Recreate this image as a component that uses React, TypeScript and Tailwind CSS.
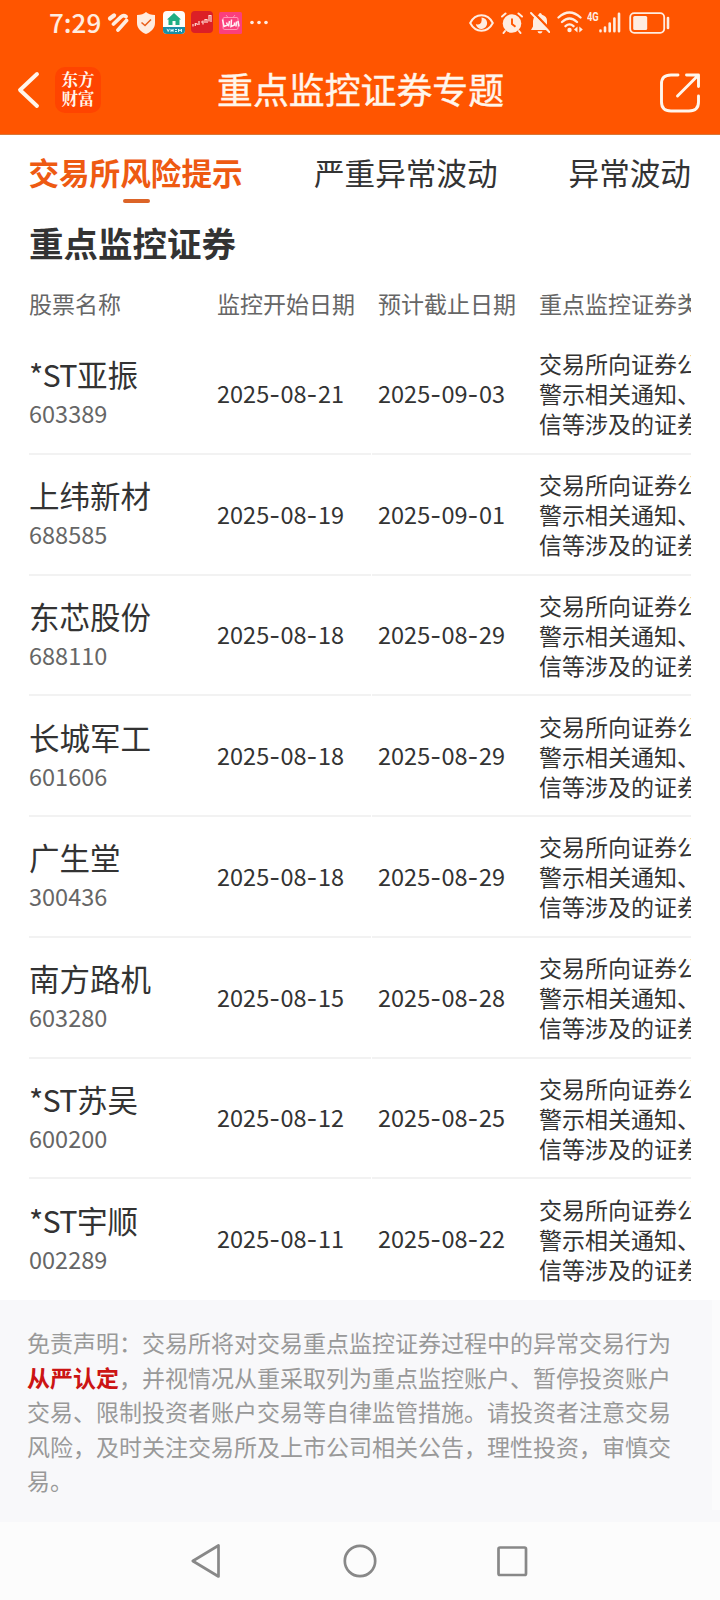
import React from "react";

const rows = [
  ["*ST亚振", "603389", "2025-08-21", "2025-09-03"],
  ["上纬新材", "688585", "2025-08-19", "2025-09-01"],
  ["东芯股份", "688110", "2025-08-18", "2025-08-29"],
  ["长城军工", "601606", "2025-08-18", "2025-08-29"],
  ["广生堂", "300436", "2025-08-18", "2025-08-29"],
  ["南方路机", "603280", "2025-08-15", "2025-08-28"],
  ["*ST苏吴", "600200", "2025-08-12", "2025-08-25"],
  ["*ST宇顺", "002289", "2025-08-11", "2025-08-22"],
];

const disclaimer = [
  "交易、限制投资者账户交易等自律监管措施。请投资者注意交易",
  "风险，及时关注交易所及上市公司相关公告，理性投资，审慎交",
  "易。",
];

function DateText({ value }: { value: string }) {
  return (
    <span className="block pt-[1px] text-[23.5px]">
      {value.split("-").map((part, i) => (
        <React.Fragment key={i}>
          {i > 0 && <span className="font-['Inter'] tracking-[0.5px]">-</span>}
          {part}
        </React.Fragment>
      ))}
    </span>
  );
}

function StockName({ name }: { name: string }) {
  const flagged = name.startsWith("*ST");
  return (
    <span className="block h-[40px] text-[30.500px] leading-[37px]">
      {flagged && <span className="tracking-[-0.7px]">*ST</span>}
      {flagged ? name.slice(3) : name}
    </span>
  );
}

function StatusBar() {
  return (
    <div className="flex h-[45px] items-start pl-[49px] text-[#ffece0]">
      <span className="mt-[4px] w-[58px] text-[26px] leading-[36px] font-medium">7:29</span>
      <svg className="mt-[12px] h-[22px] w-[22px]" viewBox="0 0 22 22" fill="none" stroke="currentColor" strokeLinecap="round" strokeLinejoin="round">
        <path d="M3 6.500L7 3.500" strokeWidth="4.200" />
        <path d="M6.500 12L14 4.800Q16.500 2.500 19 4.500M11 18L19.500 8.500" strokeWidth="3.700" />
      </svg>
      <svg className="mt-[12px] ml-[8px] h-[22px] w-[18px]" viewBox="0 0 18 22">
        <path d="M9 0C11 2 14 3 18 3V11C18 16.500 14 20 9 22C4 20 0 16.500 0 11V3C4 3 7 2 9 0Z" fill="currentColor" />
        <path d="M4.500 10.500L8 13.500L14 7.500" fill="none" stroke="#e8601c" strokeWidth="1.600" />
      </svg>
      <svg className="mt-[11px] ml-[8px] h-[23px] w-[22px]" viewBox="0 0 22 23">
        <defs>
          <clipPath id="homeClip"><rect width="22" height="23" rx="4" /></clipPath>
        </defs>
        <g clipPath="url(#homeClip)">
          <rect width="22" height="23" fill="#fdfdfa" />
          <path d="M11 2L18 8.500H16.500V14H12.500V10H9.500V14H5.500V8.500H4Z" fill="#1fae84" />
          <rect y="16" width="22" height="7" fill="#1a8fa6" />
          <path d="M4 17.800L5.200 20.500L6.400 17.800M8 21V18M8 19.500H10V18M10 21V18.500M12 18.500H14M12 20.500H14M15.500 21V18L17 20L18.500 18V21" stroke="#e9ffff" strokeWidth="0.900" fill="none" />
        </g>
      </svg>
      <svg className="mt-[11px] ml-[6px] h-[22px] w-[22px]" viewBox="0 0 22 22">
        <rect width="22" height="22" rx="4" fill="#dc1f26" />
        <path d="M2 15.500V13M4.300 15V12M5 12.500L7 13.500M8 14V10M10 11H12M12 13.500V9.500M14 12V8.500H16V12M18 10.500V4.500H20V11" stroke="#ffd9d4" strokeWidth="1.200" fill="none" />
      </svg>
      <svg className="mt-[12px] ml-[6px] h-[22px] w-[23px]" viewBox="0 0 23 22">
        <rect width="23" height="22" rx="1.500" fill="#fb3f7d" />
        <path d="M7 3L9 5.500M16 3L14 5.500M5 5.500H18Q19 5.500 19 7V16Q19 17.500 17 17.500H6Q4 17.500 4 16V7Q4 5.500 5 5.500Z" stroke="#ff93b6" strokeWidth="1" fill="none" />
        <path d="M3.500 7.500L5 14.500L8.500 13L7.500 10.500M10.500 9L9.500 14.500M12.500 7.500L12 14.500L15.500 13L15.500 10.500M17.500 9.500L17 14.500M19 9L20 14.500" stroke="#fff0f5" strokeWidth="1.500" fill="none" />
      </svg>
      <svg className="mt-[20px] ml-[8px] h-[5px] w-[18px]" viewBox="0 0 18 5" fill="currentColor">
        <circle cx="2" cy="2.500" r="1.800" /><circle cx="9" cy="2.500" r="1.800" /><circle cx="16" cy="2.500" r="1.800" />
      </svg>

      <svg className="mt-[14px] ml-[201px] h-[18px] w-[25px]" viewBox="0 0 25 18">
        <path d="M1.200 9C6.500-1.200 18.500-1.200 23.800 9C18.500 19.200 6.500 19.200 1.200 9Z" fill="none" stroke="currentColor" strokeWidth="2" />
        <path d="M12.500 3.500A5.700 5.700 0 1 1 6.800 10Q10.500 11.500 12.200 8.500Q13 6 12.500 3.500Z" fill="currentColor" />
      </svg>
      <svg className="mt-[12px] ml-[7px] h-[22px] w-[22px]" viewBox="0 0 22 22">
        <circle cx="11" cy="11.500" r="9.300" fill="currentColor" />
        <path d="M1 4.500L4.500 1.500M21 4.500L17.500 1.500M4 19L2.500 21M18 19L19.500 21" stroke="currentColor" strokeWidth="2" strokeLinecap="round" />
        <path d="M11 6.500V12L14.500 14.800" fill="none" stroke="#ff5500" strokeWidth="1.900" />
      </svg>
      <svg className="mt-[12px] ml-[7px] h-[22px] w-[20px]" viewBox="0 0 20 22">
        <path d="M1 18L3 14.500V9Q3.500 3.500 8.500 2.700Q9 1 10.200 1T12 2.700Q17 4 17 9V14.500L19 18ZM7.500 19.200H12.500Q12 21.500 10 21.500T7.500 19.200Z" fill="currentColor" />
        <path d="M2.500-0.500L21 18.500" stroke="#ff5500" strokeWidth="2.400" />
        <path d="M1 1L19.300 20" stroke="currentColor" strokeWidth="1.900" strokeLinecap="round" />
      </svg>
      <svg className="mt-[11px] ml-[7px] h-[22px] w-[27px]" viewBox="0 0 27 22">
        <g fill="none" stroke="currentColor" strokeWidth="2.300" strokeLinecap="round">
          <path d="M1.500 6.500Q12.500-3.500 23.500 6.500M5 11Q12.500 4 20 11M8.500 15.200Q12.500 11.500 16.500 15.200" />
        </g>
        <circle cx="12.500" cy="19" r="2.200" fill="currentColor" />
        <path d="M20.500 15.500V21.500L17 18.500ZM22.300 15.500V21.500L25.800 18.500Z" fill="currentColor" />
      </svg>
      <span className="mt-[9px] ml-[3px] w-[12px] font-['Roboto'] text-[13px] leading-[15px] font-bold whitespace-nowrap"><span className="inline-block origin-left scale-x-[0.72]">4G</span></span>
      <svg className="mt-[12px] h-[21px] w-[22px]" viewBox="0 0 22 21" fill="none" stroke="currentColor" strokeWidth="2.600" strokeLinecap="round">
        <path d="M1.500 18.500V19.200M6 15.500V19.200M10.700 11.500V19.200M15.400 6.500V19.200M20 1.800V19.200" />
      </svg>
      <svg className="mt-[12px] ml-[8px] h-[22px] w-[42px]" viewBox="0 0 42 22">
        <rect x="1.200" y="1.200" width="34" height="19.600" rx="4" fill="none" stroke="currentColor" strokeWidth="1.800" />
        <rect x="4.200" y="4" width="14" height="14" rx="1.500" fill="currentColor" />
        <path d="M39 6V16" stroke="currentColor" strokeWidth="2.600" strokeLinecap="round" />
      </svg>
    </div>
  );
}

export default function App() {
  return (
    <div className="flex h-[1600px] w-[720px] flex-col overflow-hidden bg-white font-['Noto_Sans_CJK_SC',sans-serif] text-[#333]">
      <header className="flex h-[135px] shrink-0 flex-col border-b border-[#d97838] bg-[#ff5500]">
        <StatusBar />
        <div className="flex h-[89px] items-center text-[#fff6ec]">
          <svg className="ml-[17px] h-[38px] w-[24px]" viewBox="0 0 24 38" fill="none" stroke="currentColor" strokeWidth="3.900" strokeLinecap="round" strokeLinejoin="round">
            <path d="M20 3L3 19L20 35" />
          </svg>
          <div className="ml-[14px] flex h-[46px] w-[46px] flex-col items-center justify-center rounded-[10px] bg-[#ff4400] pb-[2px] font-['Noto_Serif_CJK_SC','Noto_Sans_CJK_SC',serif] text-[16.500px] leading-[19px] font-bold">
            <span>东方</span>
            <span>财富</span>
          </div>
          <h1 className="ml-[116px] w-[288px] pb-[4px] text-[35.900px] leading-[44px] whitespace-nowrap [-webkit-text-stroke:0.4px_#fff6ec]">重点监控证券专题</h1>
          <svg className="mt-[7px] ml-[154px] h-[42px] w-[42px]" viewBox="0 0 42 42" fill="none" stroke="currentColor" strokeWidth="2.900" strokeLinecap="round" strokeLinejoin="round">
            <path d="M19 3H12Q2.500 3 2.500 12V30Q2.500 39 12 39H30Q39.500 39 39.500 30V24M27.500 3H39.500V14.500M38.500 4L18.500 24" />
          </svg>
        </div>
      </header>

      <nav className="flex h-[70px] shrink-0 items-start gap-[71px] pl-[28px] text-[30.600px] leading-[40px] whitespace-nowrap">
        <div className="flex w-[215px] flex-col items-center pt-[17px] font-bold text-[#ee5a12]">
          <span>交易所风险提示</span>
          <span className="mt-[7px] ml-[2px] h-[4px] w-[27px] rounded-full bg-[#dc6428]" />
        </div>
        <span className="pt-[17px]">严重异常波动</span>
        <span className="pt-[17px]">异常波动</span>
      </nav>

      <main className="ml-[29px] flex w-[662px] shrink-0 flex-col overflow-hidden">
        <h2 className="h-[75px] pt-[15px] text-[34.500px] leading-[44px] font-bold">重点监控证券</h2>
        <div className="flex h-[54px] pt-[7px] text-[23px] leading-[32px] whitespace-nowrap text-[#666]">
          <span className="w-[188px] shrink-0">股票名称</span>
          <span className="w-[161px] shrink-0">监控开始日期</span>
          <span className="w-[161px] shrink-0">预计截止日期</span>
          <span>重点监控证券类型</span>
        </div>
        {rows.map(([name, code, start, end]) => (
          <div key={code} className="group flex h-[120.750px] shrink-0 whitespace-nowrap">
            <div className="flex w-[342px] shrink-0 items-center border-b-2 border-[#f2f2f2] group-last:border-white">
              <div className="flex w-[188px] flex-col">
                <StockName name={name} />
                <span className="text-[23.500px] leading-[34px] text-[#666]">{code}</span>
              </div>
              <DateText value={start} />
            </div>
            <div className="ml-px flex w-[340px] shrink-0 items-center border-b-2 border-[#f2f2f2] pl-[6px] group-last:border-white">
              <div className="w-[161px] shrink-0"><DateText value={end} /></div>
              <p className="text-[23px] leading-[30px]">
                交易所向证券公<br />警示相关通知、<br />信等涉及的证券
              </p>
            </div>
          </div>
        ))}
      </main>

      <section className="flex h-[222px] shrink-0 bg-[#f8f8fa]">
        <div className="w-[712px] pt-[25px] pl-[27px] text-[23px] leading-[34.500px] whitespace-nowrap text-[#999]">
          <p>免责声明：交易所将对交易重点监控证券过程中的异常交易行为</p>
          <p><strong className="font-bold text-[#cc1414]">从严认定</strong>，并视情况从重采取列为重点监控账户、暂停投资账户</p>
          {disclaimer.map((line) => <p key={line}>{line}</p>)}
        </div>
        <div className="h-[210px] w-[8px] bg-[#fbfbfc]" />
      </section>

      <footer className="flex h-[78px] shrink-0 items-center bg-[#fcfcfc]">
        <svg className="ml-[191px] h-[36px] w-[30px]" viewBox="0 0 30 36" fill="none" stroke="#888" strokeWidth="2.700" strokeLinejoin="round">
          <path d="M27.500 2.500V33.500L1.800 18Z" />
        </svg>
        <svg className="ml-[121px] h-[36px] w-[36px]" viewBox="0 0 36 36" fill="none" stroke="#888" strokeWidth="2.700">
          <circle cx="18" cy="18" r="15.200" />
        </svg>
        <svg className="ml-[116px] h-[36px] w-[36px]" viewBox="0 0 36 36" fill="none" stroke="#888" strokeWidth="2.700">
          <rect x="4.500" y="4.500" width="27.500" height="27.500" rx="1.500" />
        </svg>
      </footer>
    </div>
  );
}
